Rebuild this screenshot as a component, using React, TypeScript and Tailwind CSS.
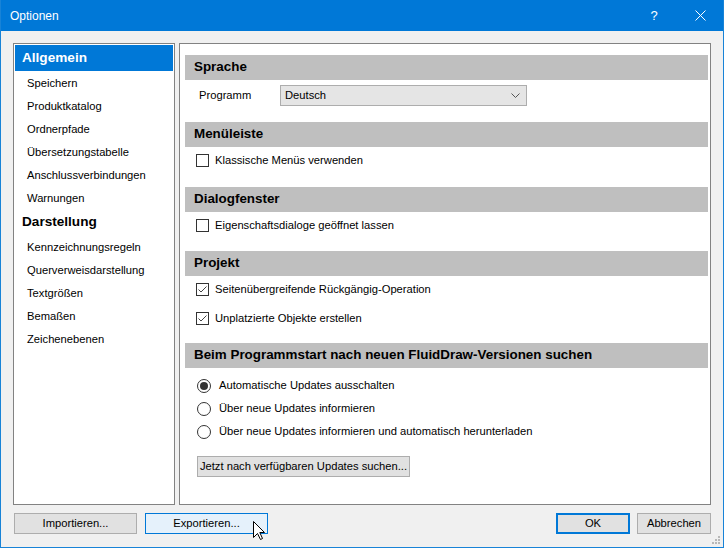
import React from "react";

const font = { fontFamily: '"Liberation Sans", Arial, sans-serif' };

const SectionHeader = ({ title }: { title: string }) => (
  <div className="h-[25px] bg-[#bfbfbf] pl-[9px] flex items-center font-bold text-[13.4px] text-black">
    {title}
  </div>
);

const CheckRow = ({ label, checked, className }: { label: string; checked?: boolean; className?: string }) => (
  <div className={`flex items-center h-[13px] pl-[11px] gap-[6px] ${className ?? ""}`}>
    <div className="w-[13px] h-[13px] border border-[#333333] bg-white flex items-center justify-center">
      {checked && (
        <svg width="11" height="11" viewBox="0 0 11 11">
          <path d="M1.5 5.5 L4 8 L9.5 2.5" fill="none" stroke="#444" strokeWidth="1" />
        </svg>
      )}
    </div>
    <span className="text-[11.2px] text-black leading-none">{label}</span>
  </div>
);

const RadioRow = ({ label, checked, className }: { label: string; checked?: boolean; className?: string }) => (
  <div className={`flex items-center h-[14px] pl-[12px] gap-[8px] ${className ?? ""}`}>
    <div className="w-[14px] h-[14px] rounded-full border border-[#333333] bg-white flex items-center justify-center">
      {checked && <div className="w-[8px] h-[8px] rounded-full bg-[#333333]" />}
    </div>
    <span className="text-[11.2px] text-black leading-none">{label}</span>
  </div>
);

const NavGroup = ({ label, active }: { label: string; active?: boolean }) => (
  <div
    className={`h-[26px] pl-[7px] flex items-center font-bold text-[13.6px] ${
      active ? "bg-[#0078d7] text-white" : "text-black"
    }`}
  >
    {label}
  </div>
);

const NavItem = ({ label }: { label: string }) => (
  <div className="h-[23px] pl-[12px] pt-[2px] flex items-center text-[11.2px] text-black">{label}</div>
);

const Button = ({ label, className }: { label: string; className?: string }) => (
  <div className={`h-[21px] flex items-center justify-center text-[11.2px] text-black ${className ?? ""}`}>
    {label}
  </div>
);

export default function App() {
  return (
    <div
      className="relative w-[724px] h-[548px] flex flex-col bg-[#f0f0f0] border-x border-b border-[#1883d7] overflow-hidden"
      style={font}
    >
      {/* title bar */}
      <div className="h-[31px] bg-[#0078d7] flex items-center text-white -mx-px">
        <span className="pl-[10px] text-[12px] flex-1">Optionen</span>
        <span className="w-[46px] text-center text-[13px]">?</span>
        <div className="w-[46px] flex items-center justify-center mr-[1px]">
          <svg width="11" height="11" viewBox="0 0 11 11">
            <path d="M0.5 0.5 L10.5 10.5 M10.5 0.5 L0.5 10.5" stroke="#fff" strokeWidth="1" />
          </svg>
        </div>
      </div>

      <div className="flex-1 flex flex-col px-[12px] pt-[12px] pb-[13px]">
        <div className="h-[462px] flex gap-[4px]">
          {/* navigation */}
          <div className="w-[162px] border border-[#828282] bg-white pt-[1px] px-[1px]">
            <NavGroup label="Allgemein" active />
            <NavItem label="Speichern" />
            <NavItem label="Produktkatalog" />
            <NavItem label="Ordnerpfade" />
            <NavItem label="Übersetzungstabelle" />
            <NavItem label="Anschlussverbindungen" />
            <NavItem label="Warnungen" />
            <NavGroup label="Darstellung" />
            <NavItem label="Kennzeichnungsregeln" />
            <NavItem label="Querverweisdarstellung" />
            <NavItem label="Textgrößen" />
            <NavItem label="Bemaßen" />
            <NavItem label="Zeichenebenen" />
          </div>

          {/* settings */}
          <div className="flex-1 border border-[#828282] bg-white pl-[5px] pr-[2px] pt-[11px]">
            <SectionHeader title="Sprache" />
            <div className="mt-[5px] h-[21px] flex items-center">
              <span className="w-[95px] pl-[14px] text-[11.2px] text-black">Programm</span>
              <div className="w-[247px] h-[21px] border border-[#adadad] bg-[#e5e5e5] flex items-center pl-[4px] pr-[6px]">
                <span className="flex-1 text-[11.2px] text-black">Deutsch</span>
                <svg width="9" height="5" viewBox="0 0 9 5">
                  <path d="M0.5 0.5 L4.5 4.5 L8.5 0.5" fill="none" stroke="#555" strokeWidth="1" />
                </svg>
              </div>
            </div>

            <div className="mt-[16px]">
              <SectionHeader title="Menüleiste" />
            </div>
            <CheckRow className="mt-[7px]" label="Klassische Menüs verwenden" />

            <div className="mt-[20px]">
              <SectionHeader title="Dialogfenster" />
            </div>
            <CheckRow className="mt-[7px]" label="Eigenschaftsdialoge geöffnet lassen" />

            <div className="mt-[19px]">
              <SectionHeader title="Projekt" />
            </div>
            <CheckRow className="mt-[7px]" label="Seitenübergreifende Rückgängig-Operation" checked />
            <CheckRow className="mt-[16px]" label="Unplatzierte Objekte erstellen" checked />

            <div className="mt-[18px]">
              <SectionHeader title="Beim Programmstart nach neuen FluidDraw-Versionen suchen" />
            </div>
            <RadioRow className="mt-[11px]" label="Automatische Updates ausschalten" checked />
            <RadioRow className="mt-[9px]" label="Über neue Updates informieren" />
            <RadioRow className="mt-[9px]" label="Über neue Updates informieren und automatisch herunterladen" />
            <div className="mt-[17px] pl-[12px]">
              <Button
                label="Jetzt nach verfügbaren Updates suchen..."
                className="w-[213px] bg-[#e1e1e1] border border-[#adadad]"
              />
            </div>
          </div>
        </div>

        {/* footer buttons */}
        <div className="mt-[8px] flex items-center">
          <Button label="Importieren..." className="ml-[1px] w-[123px] bg-[#e1e1e1] border border-[#adadad]" />
          <Button label="Exportieren..." className="ml-[8px] w-[123px] bg-[#e5f1fb] border border-[#0078d7]" />
          <div className="flex-1" />
          <Button label="OK" className="w-[74px] bg-[#e1e1e1] border-2 border-[#0078d7]" />
          <Button label="Abbrechen" className="ml-[7px] w-[74px] bg-[#e1e1e1] border border-[#adadad]" />
        </div>
      </div>

      {/* resize grip */}
      <svg className="absolute right-[2px] bottom-[2px]" width="10" height="10" viewBox="0 0 10 10">
        <rect x="7" y="1" width="2" height="2" fill="#b8b8b8" />
        <rect x="4" y="4" width="2" height="2" fill="#b8b8b8" />
        <rect x="7" y="4" width="2" height="2" fill="#b8b8b8" />
        <rect x="1" y="7" width="2" height="2" fill="#b8b8b8" />
        <rect x="4" y="7" width="2" height="2" fill="#b8b8b8" />
        <rect x="7" y="7" width="2" height="2" fill="#b8b8b8" />
      </svg>

      {/* mouse cursor */}
      <svg className="absolute left-[252px] top-[521px]" width="13" height="20" viewBox="0 0 13 20">
        <path
          d="M0.5 0.5 L0.5 16.5 L4.5 12.5 L7.5 18.5 L9.5 17.5 L6.8 11.5 L11.5 11.5 Z"
          fill="#fff"
          stroke="#000"
          strokeWidth="1"
          strokeLinejoin="miter"
        />
      </svg>
    </div>
  );
}
